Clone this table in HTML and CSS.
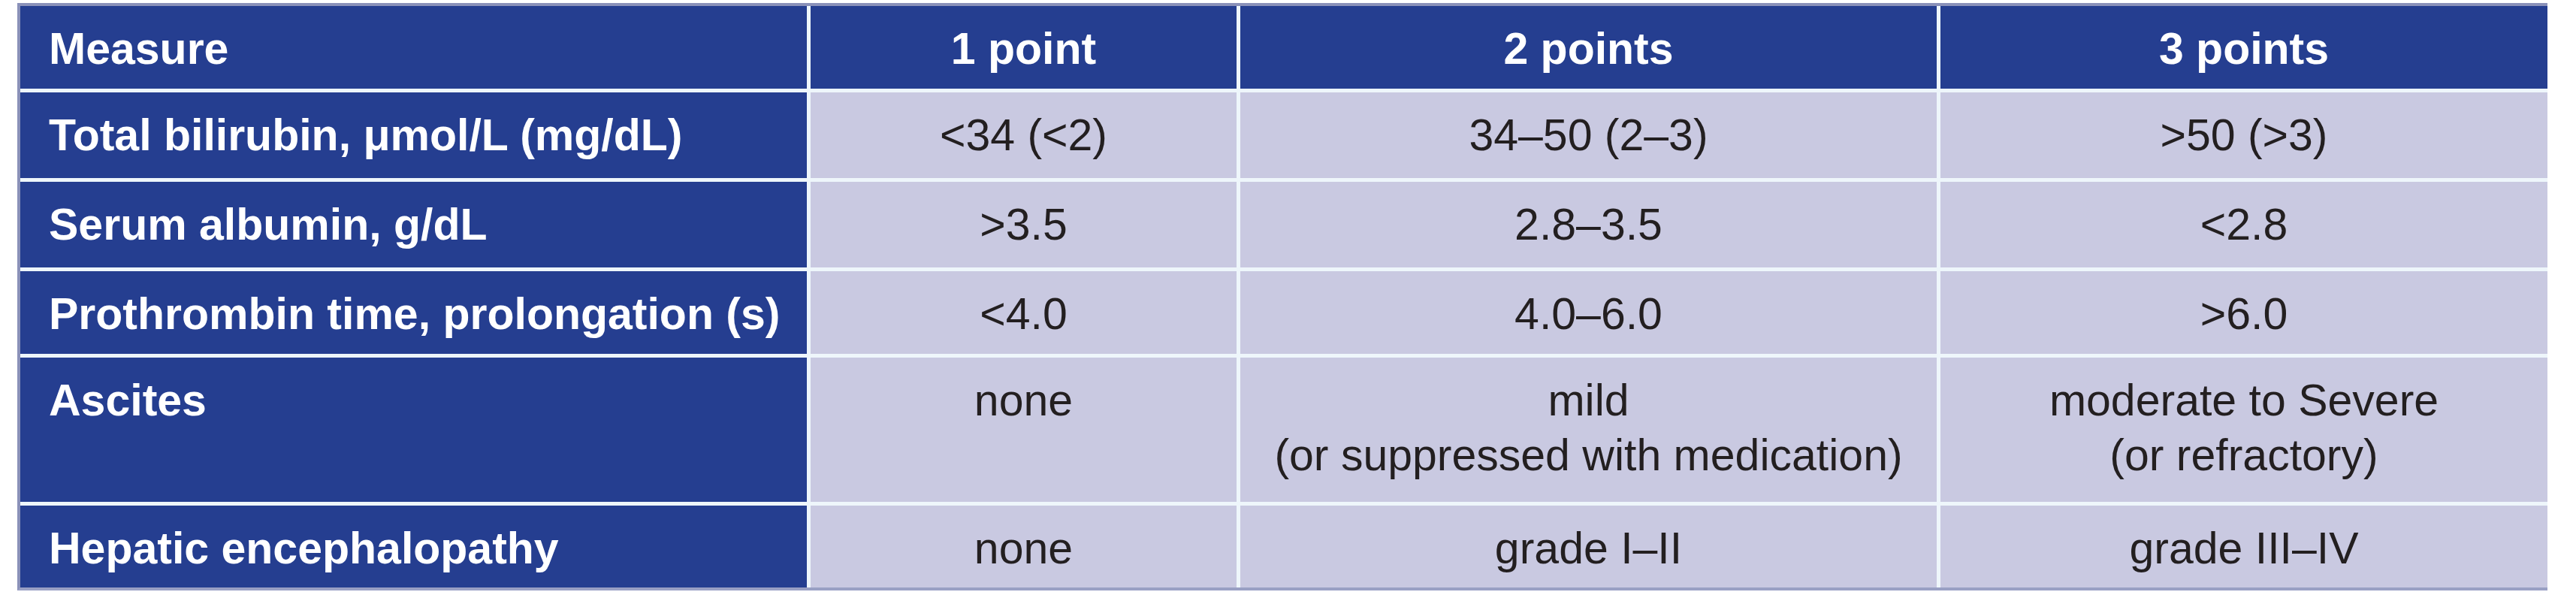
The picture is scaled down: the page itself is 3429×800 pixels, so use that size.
FILE: index.html
```html
<!DOCTYPE html>
<html lang="en">
<head>
<meta charset="utf-8">
<title>Child-Pugh score</title>
<link rel="stylesheet" href="styles.css">
</head>
<body>
<div class="page">
  <div class="table">
    <div class="cell head first">Measure</div>
    <div class="cell head">1 point</div>
    <div class="cell head">2 points</div>
    <div class="cell head">3 points</div>

    <div class="cell label">Total bilirubin, μmol/L (mg/dL)</div>
    <div class="cell data">&lt;34 (&lt;2)</div>
    <div class="cell data">34–50 (2–3)</div>
    <div class="cell data">&gt;50 (&gt;3)</div>

    <div class="cell label">Serum albumin, g/dL</div>
    <div class="cell data">&gt;3.5</div>
    <div class="cell data">2.8–3.5</div>
    <div class="cell data">&lt;2.8</div>

    <div class="cell label">Prothrombin time, prolongation (s)</div>
    <div class="cell data">&lt;4.0</div>
    <div class="cell data">4.0–6.0</div>
    <div class="cell data">&gt;6.0</div>

    <div class="cell label">Ascites</div>
    <div class="cell data">none</div>
    <div class="cell data">mild<br>(or suppressed with medication)</div>
    <div class="cell data">moderate to Severe<br>(or refractory)</div>

    <div class="cell label">Hepatic encephalopathy</div>
    <div class="cell data">none</div>
    <div class="cell data">grade I–II</div>
    <div class="cell data">grade III–IV</div>
  </div>
</div>
</body>
</html>
```

FILE: styles.css
```css
html, body {
  margin: 0;
  padding: 0;
  background: #ffffff;
}

.page {
  padding: 4px 0 0 23px;
}

.table {
  display: grid;
  grid-template-columns: 1047px 567px 927px 808px;
  grid-template-rows: 110px 114px 114px 110px 192px 109px;
  column-gap: 5px;
  row-gap: 5px;
  width: 3364px;
  background: #eef6fb;
  border-top: 4px solid #8a91b9;
  border-left: 4px solid #8a91b9;
  border-bottom: 4px solid #9aa0c4;
  font-family: "Liberation Sans", Arial, sans-serif;
  font-size: 59px;
  line-height: 73px;
}

.cell {
  padding: 21px 0 0 0;
  box-sizing: border-box;
}

.head {
  background: #253e90;
  color: #ffffff;
  font-weight: bold;
  text-align: center;
}

.head.first {
  text-align: left;
  padding-left: 38px;
}

.label {
  background: #253e90;
  color: #ffffff;
  font-weight: bold;
  padding-left: 38px;
}

.data {
  background: #c9c9e1;
  color: #231f20;
  text-align: center;
}
```
